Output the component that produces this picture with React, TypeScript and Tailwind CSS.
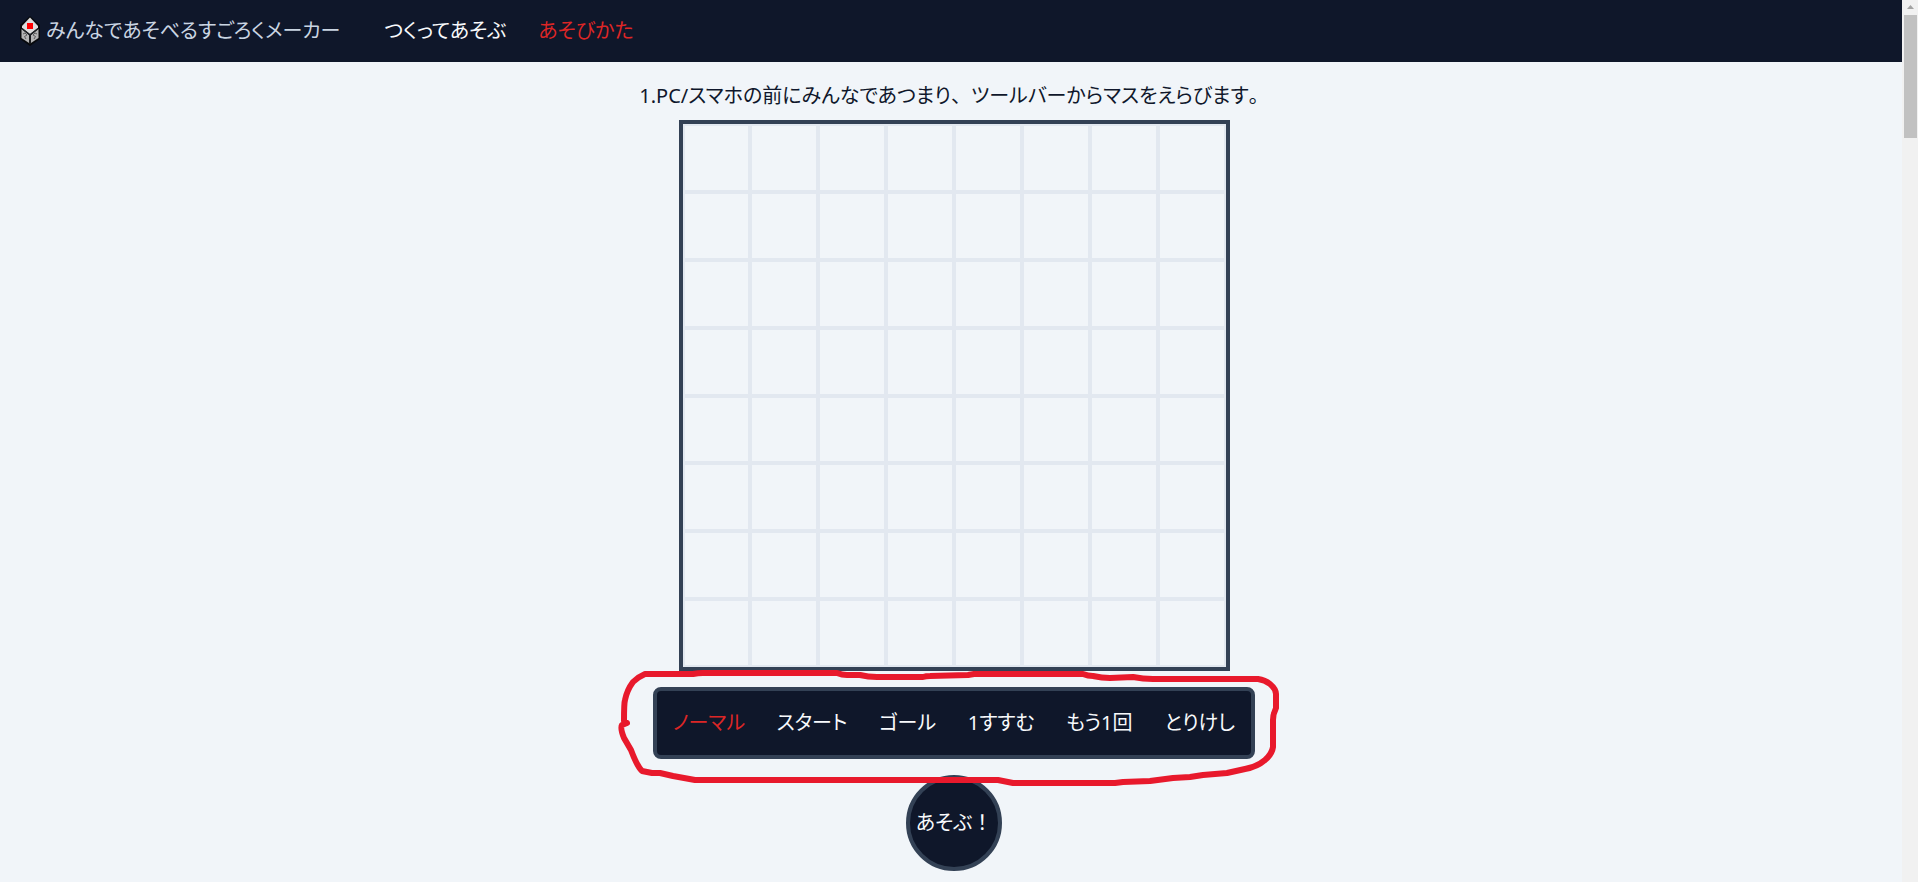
const tools = ["ノーマル", "スタート", "ゴール", "1すすむ", "もう1回", "とりけし"];
const cells = Array.from({ length: 64 }, (_, i) => i);

function Logo() {
  return (
    <svg viewBox="0 0 20 30" className="h-[30px] w-5" aria-hidden="true">
      <path d="M10 0 0 9v14l10 7 10-7V9z" fill="#07090c" />
      <path d="M10 1.500 2 10v2l8 6 8-6v-2z" fill="#dcdcdc" />
      <path d="M1.500 13 9 19v8L1.500 22z" fill="#b4b4b4" />
      <path d="M18.500 13 11 19v8l7.500-5z" fill="#b4b4b4" />
      <path d="M2 12.500 10 19l8-6.500M10 19v9" fill="none" stroke="#202326" strokeWidth="1.400" />
      <path d="m3 18 2-1 2 2-2.500 1.500 1.500 2.500M17 18l-2-1-2 2 2.500 1.500-1.500 2.500" fill="none" stroke="#5c5c5c" strokeWidth="1" />
      <rect x="7" y="7" width="6" height="6" fill="#ff0000" />
    </svg>
  );
}

function Marker() {
  return (
    <svg
      viewBox="616 666 668 124"
      className="pointer-events-none absolute -top-[25px] -left-[41px] z-10 h-[124px] w-[668px]"
      aria-hidden="true"
    >
      <path
        d="M627 723 624 721Q624 703 625 700Q627 690 633 682Q638 677 645 674L652 674 693 674Q698 673 703 673L837 673Q842 675 847 675L860 675Q868 677 877 677L923 677Q926 676 930 676L968 675 974 674 1083 674Q1088 676 1093 676Q1102 678 1110 678L1133 677Q1143 679 1153 679L1258 679Q1265 680 1270 684Q1276 689 1276 694L1276 708Q1273 714 1273 720L1273 747Q1272 754 1265 760Q1257 767 1245 769L1227 773 1203 775 1190 777 1173 778 1150 781 1123 782 1115 783 1013 783 998 780 695 780 673 776 660 773 652 773 642 771Q637 766 631 750L624 738Q620 728 622 725Z"
        fill="none"
        stroke="#e8192c"
        strokeWidth="6"
        strokeLinejoin="round"
      />
    </svg>
  );
}

export default function App() {
  return (
    <div className="flex min-h-screen bg-slate-100 font-['Noto_Sans','Noto_Sans_CJK_JP',sans-serif] text-xl text-slate-900 [font-feature-settings:'palt']">
      <div className="flex min-w-0 flex-1 flex-col">
        <header className="flex h-[62px] items-center bg-[#0f172a] pl-5">
          <a href="#top" className="flex items-center gap-1.5 text-slate-300">
            <Logo />
            みんなであそべるすごろくメーカー
          </a>
          <nav className="ml-11 flex gap-8">
            <a href="#make" className="text-slate-50">つくってあそぶ</a>
            <a href="#howto" className="text-[#dc2626]">あそびかた</a>
          </nav>
        </header>
        <main className="flex flex-col items-center pt-4 pl-1.5">
          <p className="mb-1.5 leading-9">
            1.PC/スマホの前にみんなであつまり
            <span className="[font-feature-settings:normal]">、</span>
            ツールバーからマスをえらびます
            <span className="[font-feature-settings:normal]">。</span>
          </p>
          <div className="grid aspect-square w-[551px] grid-cols-8 grid-rows-8 border-4 border-[#334155]">
            {cells.map((i) => (
              <div key={i} className="border-2 border-[#e2e8f0]" />
            ))}
          </div>
          <div className="relative mt-4 flex h-[72px] w-[602px] items-center justify-between rounded-lg border-4 border-[#334155] bg-[#0f172a] px-4 text-slate-50">
            {tools.map((tool, i) => (
              <button key={tool} type="button" className={i === 0 ? "text-[#dc2626]" : ""}>
                {tool}
              </button>
            ))}
            <Marker />
          </div>
          <button
            type="button"
            className="mt-4 size-24 rounded-full border-4 border-[#334155] bg-[#0f172a] whitespace-nowrap text-slate-50"
          >
            あそぶ<span className="[font-feature-settings:normal]">！</span>
          </button>
        </main>
      </div>
      <div className="flex w-4 flex-col items-center bg-[#f1f1f1]" aria-hidden="true">
        <svg viewBox="0 0 16 15" className="h-[15px] w-4">
          <path d="M5 9 8.500 5 12 9z" fill="#a3a3a3" />
        </svg>
        <div className="h-[123px] w-[13px] bg-[#c1c1c1]" />
      </div>
    </div>
  );
}
